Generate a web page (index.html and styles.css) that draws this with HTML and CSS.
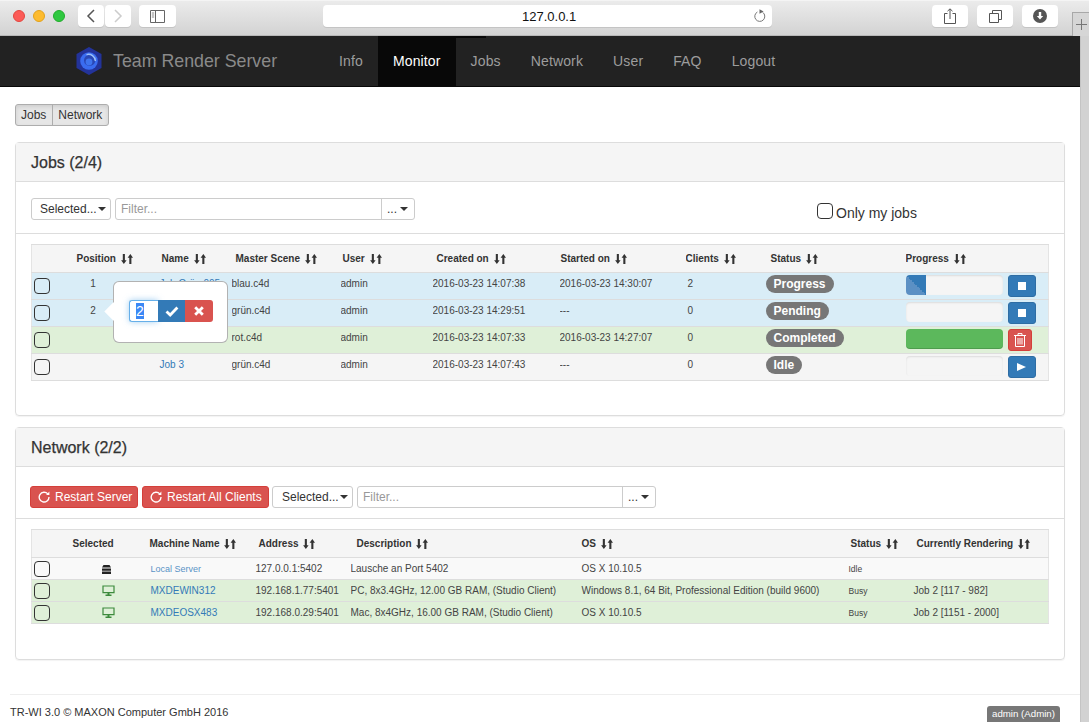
FILE: index.html
```html
<!DOCTYPE html>
<html lang="en">
<head>
<meta charset="utf-8">
<title>Team Render Server</title>
<link rel="stylesheet" href="styles.css">
</head>
<body>
<svg class="defs" width="0" height="0" aria-hidden="true">
  <defs>
    <symbol id="sort" viewBox="0 0 12 10"><path d="M1.8 0h2.1v6.2h1.7L2.85 10 .1 6.2h1.7zM8.3 10V3.8H6.6L9.35 0l2.75 3.8h-1.7V10z"/></symbol>
    <symbol id="restart" viewBox="0 0 14 14"><path d="M11.4 3.4A5.7 5.7 0 1 0 12.8 7" fill="none" stroke="currentColor" stroke-width="1.6"/><path d="M9.4 4.6h3.9V.7z" fill="currentColor"/></symbol>
    <symbol id="monitor" viewBox="0 0 13 11"><path d="M1 1h11v6.6H1z" fill="none" stroke="#3c8a3c" stroke-width="1.2"/><path d="M5.5 8h2v1.6h2V11h-6V9.6h2z" fill="#3c8a3c"/></symbol>
    <symbol id="caret" viewBox="0 0 8 4"><path d="M0 0h8L4 4z"/></symbol>
  </defs>
</svg>

<header class="toolbar">
  <div class="lights"><span class="light light-red"></span><span class="light light-amber"></span><span class="light light-green"></span></div>
  <div class="nav-buttons">
    <span class="tb-btn back"><svg width="10" height="14" viewBox="0 0 10 14"><path d="M8 1 2 7l6 6" fill="none" stroke="#555" stroke-width="1.5"/></svg></span>
    <span class="tb-btn back"><svg width="10" height="14" viewBox="0 0 10 14"><path d="M2 1l6 6-6 6" fill="none" stroke="#ccc" stroke-width="1.5"/></svg></span>
  </div>
  <span class="tb-btn side"><svg width="15" height="13" viewBox="0 0 15 13"><path d="M.5.5h14v12H.5zM5.5.5v12" fill="none" stroke="#666"/><path d="M1.8 3h2.4M1.8 5h2.4M1.8 7h2.4" stroke="#888"/></svg></span>
  <div class="address">
    <span class="url">127.0.0.1</span>
    <svg class="reload" width="13" height="14" viewBox="0 0 13 14"><path d="M9.8 3.4A5 5 0 1 1 4.4 3" fill="none" stroke="#777" stroke-width="1"/><path d="M5.5 .2v4.6L9.6 2.6z" fill="#666" transform="translate(1 0)"/></svg>
  </div>
  <div class="actions">
    <span class="tb-btn act"><svg width="12" height="16" viewBox="0 0 12 16"><path d="M3.5 5.5H.5v10h11v-10h-3M6 11V1M3.5 3.2 6 .8l2.5 2.4" fill="none" stroke="#555"/></svg></span>
    <span class="tb-btn act"><svg width="13" height="13" viewBox="0 0 13 13"><path d="M.5 3.5h9v9h-9zM3.5 3.5v-3h9v9h-3" fill="none" stroke="#555"/></svg></span>
    <span class="tb-btn act"><svg width="14" height="14" viewBox="0 0 14 14"><circle cx="7" cy="7" r="7" fill="#555"/><path d="M5.8 3h2.4v4h2L7 10.6 3.8 7h2z" fill="#fff"/></svg></span>
  </div>
  <span class="new-tab"><svg width="11" height="11" viewBox="0 0 11 11"><path d="M5.5 0v11M0 5.5h11" stroke="#777"/></svg></span>
</header>

<div class="viewport">
  <div class="page">
    <nav class="navbar">
      <svg class="logo" width="26" height="28" viewBox="0 0 26 28">
        <path d="M13 0l12.5 7v14L13 28 .5 21V7z" fill="#23339a"/>
        <circle cx="13" cy="14" r="8.8" fill="#3a6cf0"/>
        <circle cx="13.6" cy="13.4" r="5.6" fill="#2a47b4"/>
        <path d="M10.5 7.6A7 7 0 0 1 19.4 14" fill="none" stroke="#9cc2f8" stroke-width="1.4"/>
        <circle cx="13" cy="15" r="3.4" fill="#3f74ee"/>
      </svg>
      <span class="brand">Team Render Server</span>
      <ul class="menu">
        <li><a class="menu-link">Info</a></li>
        <li><a class="menu-link active">Monitor</a></li>
        <li><a class="menu-link">Jobs</a></li>
        <li><a class="menu-link">Network</a></li>
        <li><a class="menu-link">User</a></li>
        <li><a class="menu-link">FAQ</a></li>
        <li><a class="menu-link">Logout</a></li>
      </ul>
    </nav>

    <main class="content">
      <div class="toggle-group"><span class="toggle">Jobs</span><span class="toggle">Network</span></div>

      <section class="panel panel-jobs">
        <h2 class="panel-title">Jobs (2/4)</h2>
        <div class="panel-tools">
          <span class="select-btn sel-jobs">Selected...<svg class="caret" width="8" height="4"><use href="#caret"/></svg></span>
          <div class="filter filter-jobs"><span class="filter-input">Filter...</span><span class="filter-more">...<svg class="caret" width="8" height="4"><use href="#caret"/></svg></span></div>
          <label class="only-mine"><span class="check"></span>Only my jobs</label>
        </div>
        <div class="panel-body">
          <table class="grid jobs">
            <colgroup><col class="j0"><col class="j1"><col class="j2"><col class="j3"><col class="j4"><col class="j5"><col class="j6"><col class="j7"><col class="j8"><col class="j9"></colgroup>
            <thead>
              <tr>
                <th></th>
                <th>Position <svg class="sort"><use href="#sort"/></svg></th>
                <th>Name <svg class="sort"><use href="#sort"/></svg></th>
                <th>Master Scene <svg class="sort"><use href="#sort"/></svg></th>
                <th>User <svg class="sort"><use href="#sort"/></svg></th>
                <th>Created on <svg class="sort"><use href="#sort"/></svg></th>
                <th>Started on <svg class="sort"><use href="#sort"/></svg></th>
                <th>Clients <svg class="sort"><use href="#sort"/></svg></th>
                <th>Status <svg class="sort"><use href="#sort"/></svg></th>
                <th>Progress <svg class="sort"><use href="#sort"/></svg></th>
              </tr>
            </thead>
            <tbody>
              <tr class="info">
                <td><span class="check"></span></td>
                <td><span class="pos">1</span></td>
                <td><a class="link">Job Grün 005</a></td>
                <td>blau.c4d</td><td>admin</td><td>2016-03-23 14:07:38</td><td>2016-03-23 14:30:07</td><td>2</td>
                <td><span class="badge">Progress</span></td>
                <td><div class="progress-cell"><div class="bar"><div class="fill part"></div></div><span class="act-btn btn-blue"><svg width="8" height="8"><rect width="8" height="8" fill="#fff"/></svg></span></div></td>
              </tr>
              <tr class="info">
                <td><span class="check"></span></td>
                <td><span class="pos">2</span></td>
                <td><a class="link">Job Grün 002</a></td>
                <td>grün.c4d</td><td>admin</td><td>2016-03-23 14:29:51</td><td>---</td><td>0</td>
                <td><span class="badge">Pending</span></td>
                <td><div class="progress-cell"><div class="bar"></div><span class="act-btn btn-blue"><svg width="8" height="8"><rect width="8" height="8" fill="#fff"/></svg></span></div></td>
              </tr>
              <tr class="done">
                <td><span class="check"></span></td>
                <td></td>
                <td><a class="link">Job 1</a></td>
                <td>rot.c4d</td><td>admin</td><td>2016-03-23 14:07:33</td><td>2016-03-23 14:27:07</td><td>0</td>
                <td><span class="badge">Completed</span></td>
                <td><div class="progress-cell"><div class="bar full"></div><span class="act-btn btn-red"><svg width="12" height="14" viewBox="0 0 12 14"><path d="M0 2.5h12M4 2.5V.6h4v1.9M1.5 2.5v11h9v-11M4 5v6.5M6 5v6.5M8 5v6.5" fill="none" stroke="#fff"/></svg></span></div></td>
              </tr>
              <tr class="idle">
                <td><span class="check"></span></td>
                <td></td>
                <td><a class="link">Job 3</a></td>
                <td>grün.c4d</td><td>admin</td><td>2016-03-23 14:07:43</td><td>---</td><td>0</td>
                <td><span class="badge">Idle</span></td>
                <td><div class="progress-cell"><div class="bar"></div><span class="act-btn btn-blue"><svg width="9" height="8" viewBox="0 0 9 8"><path d="M0 0l9 4-9 4z" fill="#fff"/></svg></span></div></td>
              </tr>
            </tbody>
          </table>
          <div class="popover">
            <span class="pop-input"><span class="selected-text">2</span></span><span class="pop-btn ok"><svg width="14" height="11" viewBox="0 0 14 11"><path d="M1.5 5.5 5.2 9l7.2-7.5" fill="none" stroke="#fff" stroke-width="2.8"/></svg></span><span class="pop-btn no"><svg width="10" height="10" viewBox="0 0 10 10"><path d="M1.2 1.2l7.6 7.6M8.8 1.2 1.2 8.8" stroke="#fff" stroke-width="2.8"/></svg></span>
          </div>
        </div>
      </section>

      <section class="panel panel-net">
        <h2 class="panel-title">Network (2/2)</h2>
        <div class="panel-tools tools-net">
          <span class="danger-btn rs"><svg class="restart"><use href="#restart"/></svg>Restart Server</span>
          <span class="danger-btn ra"><svg class="restart"><use href="#restart"/></svg>Restart All Clients</span>
          <span class="select-btn sel-net">Selected...<svg class="caret" width="8" height="4"><use href="#caret"/></svg></span>
          <div class="filter filter-net"><span class="filter-input">Filter...</span><span class="filter-more">...<svg class="caret" width="8" height="4"><use href="#caret"/></svg></span></div>
        </div>
        <div class="panel-body">
          <table class="grid net">
            <colgroup><col class="n0"><col class="n1"><col class="n2"><col class="n3"><col class="n4"><col class="n5"><col class="n6"><col class="n7"></colgroup>
            <thead>
              <tr>
                <th></th>
                <th>Selected</th>
                <th>Machine Name <svg class="sort"><use href="#sort"/></svg></th>
                <th>Address <svg class="sort"><use href="#sort"/></svg></th>
                <th>Description <svg class="sort"><use href="#sort"/></svg></th>
                <th>OS <svg class="sort"><use href="#sort"/></svg></th>
                <th>Status <svg class="sort"><use href="#sort"/></svg></th>
                <th>Currently Rendering <svg class="sort"><use href="#sort"/></svg></th>
              </tr>
            </thead>
            <tbody>
              <tr class="local">
                <td><span class="check"></span></td>
                <td><svg width="9" height="9" viewBox="0 0 9 9"><path d="M1.5 0h6L9 2.6H0zM0 3.4h9v2.4H0zM0 6.6h9V9H0z" fill="#222"/></svg></td>
                <td><a class="link small">Local Server</a></td>
                <td>127.0.0.1:5402</td><td>Lausche an Port 5402</td><td>OS X 10.10.5</td><td class="tiny">Idle</td><td></td>
              </tr>
              <tr class="done">
                <td><span class="check"></span></td>
                <td><svg class="mon"><use href="#monitor"/></svg></td>
                <td><a class="link">MXDEWIN312</a></td>
                <td>192.168.1.77:5401</td><td>PC, 8x3.4GHz, 12.00 GB RAM, (Studio Client)</td><td>Windows 8.1, 64 Bit, Professional Edition (build 9600)</td><td class="tiny">Busy</td><td>Job 2 [117 - 982]</td>
              </tr>
              <tr class="done">
                <td><span class="check"></span></td>
                <td><svg class="mon"><use href="#monitor"/></svg></td>
                <td><a class="link">MXDEOSX483</a></td>
                <td>192.168.0.29:5401</td><td>Mac, 8x4GHz, 16.00 GB RAM, (Studio Client)</td><td>OS X 10.10.5</td><td class="tiny">Busy</td><td>Job 2 [1151 - 2000]</td>
              </tr>
            </tbody>
          </table>
        </div>
      </section>
    </main>

    <footer class="footer">
      <span>TR-WI 3.0 © MAXON Computer GmbH 2016</span>
      <span class="user-tag">admin (Admin)</span>
    </footer>
  </div>
  <div class="strip"></div>
</div>
</body>
</html>
```
FILE: styles.css
```css
* { box-sizing: border-box; }
html, body { margin: 0; height: 100%; }
body {
  width: 1089px;
  height: 722px;
  overflow: hidden;
  background: #fff;
  font-family: "Liberation Sans", Arial, sans-serif;
  color: #333;
}
.defs { position: absolute; }

/* browser toolbar */
.toolbar {
  position: relative;
  height: 36px;
  display: flex;
  align-items: flex-start;
  padding: 4px 0 0 13px;
  background: linear-gradient(#ebebeb, #d3d3d3);
  border-top: 1px solid #f4f4f4;
  border-bottom: 1px solid #b8b8b8;
}
.toolbar > * { flex: none; }
.lights { display: flex; gap: 8px; margin-top: 5px; width: 65px; }
.light { flex: none; width: 12px; height: 12px; border-radius: 50%; }
.light-red { background: #fc5b57; border: 1px solid #e3463f; }
.light-amber { background: #fdbb2e; border: 1px solid #e2a21c; }
.light-green { background: #2fc840; border: 1px solid #22ac2c; }
.tb-btn {
  display: flex;
  align-items: center;
  justify-content: center;
  height: 22px;
  background: #fff;
  border-radius: 4px;
  box-shadow: 0 1px 0 #c4c4c4;
}
.nav-buttons { display: flex; gap: 1px; }
.back { width: 26px; }
.side { width: 37px; margin-left: 8px; }
.address {
  display: flex;
  align-items: center;
  width: 449px;
  height: 22px;
  margin-left: 147px;
  padding: 0 6px 0 199px;
  background: #fff;
  border-radius: 4px;
  box-shadow: 0 1px 0 #c4c4c4;
}
.url { font-size: 13px; color: #111; }
.reload { margin-left: auto; }
.actions { display: flex; gap: 9px; margin-left: 160px; }
.act { width: 36px; }
.new-tab {
  display: flex;
  align-items: center;
  justify-content: center;
  width: 17px;
  height: 24px;
  margin: 7px 0 0 14px;
  background: #d6d6d6;
  border: 1px solid #a8a8a8;
  border-bottom: 0;
  border-right: 0;
}

/* page */
.viewport { display: flex; height: 686px; }
.page { width: 1080px; flex: none; }
.strip { flex: 1; background: #d2d2d2; border-left: 1px solid #c4c4c4; }

.navbar {
  position: relative;
  display: flex;
  align-items: center;
  height: 51px;
  padding-left: 76px;
  background: #222;
  border-bottom: 1px solid #080808;
}
.logo { flex: none; }
.brand { margin-left: 11px; width: 211px; font-size: 17.8px; color: #8a8a8a; }
.menu { display: flex; list-style: none; margin: 0; padding: 0; align-self: stretch; }
.menu-link {
  position: relative;
  display: block;
  height: 50px;
  padding: 0 15px;
  font-size: 14px;
  letter-spacing: .14px;
  line-height: 50px;
  color: #9d9d9d;
}
.menu-link.active { color: #fff; background: #080808; }
.menu-link.active::after {
  content: "";
  position: absolute;
  left: 0;
  top: 0;
  width: 108px;
  height: 2px;
  background: #080808;
}

.content { padding: 17px 15px 0 15px; }
.toggle-group {
  display: inline-flex;
  height: 22px;
  border: 1px solid #adadad;
  border-radius: 3px;
  background: #e6e6e6;
  box-shadow: inset 0 2px 4px rgba(0, 0, 0, .1);
  font-size: 12px;
  line-height: 20px;
  vertical-align: top;
}
.toggle { padding: 0 6px 0 5px; color: #333; }
.toggle + .toggle { border-left: 1px solid #adadad; }

.panel {
  border: 1px solid #ddd;
  border-radius: 4px;
  box-shadow: 0 1px 1px rgba(0, 0, 0, .05);
}
.panel-jobs { height: 274px; margin-top: 16px; }
.panel-net { height: 233px; margin-top: 11px; }
.panel-title {
  height: 39px;
  margin: 0;
  padding-left: 15px;
  font-size: 16px;
  font-weight: 500;
  line-height: 39px;
  color: #333;
  background: #f5f5f5;
  border-bottom: 1px solid #ddd;
  -webkit-text-stroke: .25px #333;
}
.panel-tools {
  display: flex;
  align-items: flex-start;
  height: 52px;
  padding: 16px 0 0 15px;
  border-bottom: 1px solid #ddd;
}
.tools-net { padding: 19px 0 0 14px; }
.select-btn, .filter, .danger-btn {
  height: 22px;
  border-radius: 3px;
  font-size: 12px;
  line-height: 20px;
  white-space: nowrap;
}
.select-btn {
  display: flex;
  align-items: center;
  gap: 1px;
  padding-left: 8px;
  color: #333;
  background: #fff;
  border: 1px solid #ccc;
}
.sel-jobs { width: 80px; }
.sel-net { width: 81px; margin-left: 3px; padding-left: 9px; }
.caret { flex: none; fill: #333; }
.filter { display: flex; background: #fff; border: 1px solid #ccc; }
.filter-jobs { width: 300px; margin-left: 4px; }
.filter-net { width: 299px; margin-left: 4px; }
.filter-input { flex: 1; padding-left: 5px; color: #999; }
.filter-more {
  display: flex;
  align-items: center;
  gap: 3px;
  width: 33px;
  padding-left: 5px;
  border-left: 1px solid #ccc;
}
.only-mine {
  display: flex;
  align-items: flex-start;
  gap: 3px;
  margin: 5px 0 0 402px;
  font-size: 14px;
  line-height: 20px;
  color: #333;
}
.danger-btn {
  display: flex;
  align-items: center;
  gap: 5px;
  padding-left: 7px;
  color: #fff;
  background: #d9534f;
  border: 1px solid #d43f3a;
}
.rs { width: 108px; }
.ra { width: 127px; margin-left: 4px; }
.restart { width: 12px; height: 12px; color: #fff; }

.panel-body { position: relative; padding: 10px 14px 0 15px; }

/* tables */
.grid {
  width: 1017px;
  table-layout: fixed;
  border-collapse: collapse;
  font-size: 10px;
  color: #444;
}
.grid th, .grid td {
  padding: 0;
  border: 1px solid #ddd;
  border-width: 1px 0;
  text-align: left;
  white-space: nowrap;
  overflow: hidden;
}
.grid th {
  font-size: 10px;
  font-weight: bold;
  color: #333;
  background: #f5f5f5;
  border-color: #ddd;
}
.grid { border-left: 1px solid #e4e4e4; border-right: 1px solid #e4e4e4; }
.sort { width: 12px; height: 10px; margin-left: 2px; vertical-align: -2px; fill: #333; }
.check {
  display: block;
  flex: none;
  width: 16px;
  height: 16px;
  border: 1.3px solid #333;
  border-radius: 4px;
}
.grid td:first-child { padding-left: 2px; }
.link { color: #337ab7; }
.link.small { font-size: 9px; color: #5a93c6; }
.tiny { font-size: 8.5px; }

.j0 { width: 33px; } .j1 { width: 91px; } .j2 { width: 76px; } .j3 { width: 109px; } .j4 { width: 92px; }
.j5 { width: 127px; } .j6 { width: 126px; } .j7 { width: 80px; } .j8 { width: 140px; } .j9 { width: 143px; }
.jobs thead tr { height: 28px; }
.jobs tbody tr { height: 27px; }
.jobs th:nth-child(2) { padding-left: 12px; }
.jobs th:nth-child(3) { padding-left: 6px; }
.jobs th:nth-child(4) { padding-left: 4px; }
.jobs th:nth-child(5) { padding-left: 2px; }
.jobs th:nth-child(6) { padding-left: 4px; }
.jobs th:nth-child(7) { padding-left: 1px; }
.jobs td:nth-child(3) { padding-left: 4px; }
.jobs td:nth-child(8) { padding-left: 2px; }
.jobs th:nth-child(9) { padding-left: 5px; }
.jobs td { padding-bottom: 5px; }
.jobs td:first-child { padding-bottom: 1px; }
.jobs td:nth-child(9), .jobs td:last-child { padding: 2px 0 0; vertical-align: top; }
.pos { display: block; width: 57px; text-align: center; }
.info td { background: #d9edf7; }
.done td { background: #dff0d8; }
.idle td { background: #f5f5f5; }
.local td { background: #f9f9f9; }
.badge {
  display: inline-block;
  height: 18px;
  padding: 0 8px;
  border-radius: 10px;
  font-size: 12px;
  font-weight: bold;
  line-height: 18px;
  color: #fff;
  background: #777;
  vertical-align: top;
}
.progress-cell { display: flex; align-items: flex-start; gap: 5px; height: 22px; }
.bar {
  width: 97px;
  height: 20px;
  background: #f5f5f5;
  border-radius: 4px;
  box-shadow: inset 0 1px 2px rgba(0, 0, 0, .1);
  overflow: hidden;
}
.bar.full { background: #5cb85c; box-shadow: inset 0 -1px 0 rgba(0, 0, 0, .15); }
.fill { height: 100%; }
.part { width: 20px; background: linear-gradient(to top right, #5b90c4 50%, #337ab7 50%); }
.act-btn {
  display: flex;
  align-items: center;
  justify-content: center;
  height: 22px;
  border-radius: 3px;
}
.btn-blue { width: 28px; background: #337ab7; border: 1px solid #2e6da4; }
.btn-red { width: 24px; background: #d9534f; border: 1px solid #d43f3a; }

.popover {
  position: absolute;
  left: 97px;
  top: 47px;
  display: flex;
  width: 115px;
  height: 62px;
  padding: 18px 0 0 15px;
  background: #fff;
  border: 1px solid rgba(0, 0, 0, .3);
  border-radius: 6px;
}
.popover::before {
  content: "";
  position: absolute;
  left: -7px;
  top: 23px;
  width: 13px;
  height: 13px;
  background: #fff;
  transform: rotate(45deg);
}
.pop-input {
  width: 29px;
  height: 22px;
  padding: 2px 0 0 6px;
  background: #fff;
  border: 1px solid #66afe9;
  border-right: 0;
  border-radius: 3px 0 0 3px;
  box-shadow: 0 0 6px rgba(102, 175, 233, .6);
  font-size: 14px;
  line-height: 16px;
}
.selected-text { display: inline-block; background: #3b88f5; color: #fff; }
.pop-btn {
  display: flex;
  align-items: center;
  justify-content: center;
  height: 22px;
}
.ok { width: 27px; background: #337ab7; }
.no { width: 28px; background: #d9534f; border-radius: 0 3px 3px 0; }

.n0 { width: 29px; } .n1 { width: 85px; } .n2 { width: 106px; } .n3 { width: 99px; }
.n4 { width: 227px; } .n5 { width: 267px; } .n6 { width: 65px; } .n7 { width: 139px; }
.net thead tr { height: 28px; }
.net tbody tr { height: 22px; }
.net th:nth-child(2) { padding-left: 12px; }
.net th:nth-child(3) { padding-left: 4px; }
.net th:nth-child(4) { padding-left: 7px; }
.net th:nth-child(5) { padding-left: 6px; }
.net th:nth-child(6) { padding-left: 4px; }
.net th:nth-child(7) { padding-left: 6px; }
.net th:nth-child(8) { padding-left: 7px; }
.net td:nth-child(2) { padding-left: 41px; }
.net td:nth-child(3) { padding-left: 5px; }
.net td:nth-child(4) { padding-left: 4px; }
.net td:nth-child(6), .net td:nth-child(7), .net td:nth-child(8) { padding-left: 4px; }
.mon { width: 13px; height: 11px; }
.net td svg { vertical-align: middle; }

.footer {
  display: flex;
  align-items: flex-start;
  justify-content: space-between;
  height: 40px;
  margin: 34px 0 0 10px;
  padding: 11px 20px 0 0;
  border-top: 1px solid #eee;
  font-size: 11px;
  color: #333;
}
.user-tag {
  padding: 0 5px;
  height: 18px;
  font-size: 9.7px;
  line-height: 16px;
  color: #fff;
  background: #777;
  border-radius: 3px;
}
```
